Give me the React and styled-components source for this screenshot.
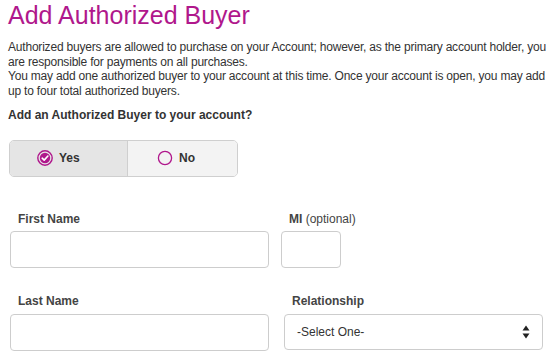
import React, { useState } from "react"
import styled, { createGlobalStyle } from "styled-components"

const Global = createGlobalStyle`
  body {
    margin: 0;
    background: #fff;
    font-family: "Liberation Sans", Arial, Helvetica, sans-serif;
    color: #333;
  }
`

const Page = styled.div`
  padding: 2px 0 0 8px;
  width: 550px;
  box-sizing: border-box;
`

const Title = styled.h1`
  margin: 0;
  font-size: 25px;
  font-weight: normal;
  color: #b0178c;
  line-height: 26px;
`

const Intro = styled.p`
  margin: 12px 0 0 0;
  font-size: 12px;
  line-height: 14.5px;
  letter-spacing: -0.2px;
  color: #333;
`

const Question = styled.div`
  margin-top: 10px;
  font-size: 12px;
  line-height: 14.5px;
  font-weight: bold;
  color: #333;
`

const Toggle = styled.div`
  display: flex;
  margin: 17px 0 0 1px;
  width: 229px;
  height: 37px;
  border: 1px solid #cfcfcf;
  border-radius: 5px;
  overflow: hidden;
  box-sizing: border-box;
`

const Option = styled.button`
  flex: ${p => (p.$first ? "0 0 117px" : "1")};
  display: flex;
  align-items: center;
  gap: 6px;
  padding: 0 0 0 ${p => (p.$first ? "27px" : "29px")};
  border: none;
  border-left: ${p => (p.$first ? "none" : "1px solid #cfcfcf")};
  background: ${p => (p.$active ? "#e5e5e5" : "#f3f3f3")};
  font-family: inherit;
  font-size: 12px;
  font-weight: bold;
  color: #333;
  cursor: pointer;
`

const Row = styled.div`
  display: flex;
  gap: ${p => p.$gap};
  margin-top: ${p => p.$top};
  margin-left: 2px;
`

const Field = styled.div`
  display: flex;
  flex-direction: column;
  width: ${p => p.$w};
`

const Label = styled.label`
  font-size: 12px;
  line-height: 14.5px;
  font-weight: bold;
  color: #444;
  padding-left: 8px;
  margin-bottom: 5px;
  white-space: nowrap;
  span {
    font-weight: normal;
  }
`

const Input = styled.input`
  height: 37px;
  box-sizing: border-box;
  border: 1px solid #cdcdcd;
  border-radius: 4px;
  background: #fff;
  outline: none;
  font-family: inherit;
  font-size: 12px;
`

const Select = styled.div`
  position: relative;
  height: 36px;
  box-sizing: border-box;
  border: 1px solid #cdcdcd;
  border-radius: 4px;
  background: #fff;
  display: flex;
  align-items: center;
  justify-content: space-between;
  padding: 0 12px 0 12px;
  font-size: 12px;
  color: #333;
`

const Check = () => (
  <svg width="16" height="16" viewBox="0 0 16 16">
    <circle cx="8" cy="8" r="7.2" fill="none" stroke="#b0178c" strokeWidth="1.4" />
    <circle cx="8" cy="8" r="5.2" fill="#b0178c" />
    <path d="M5.2 8.2 L7.2 10.1 L10.9 6" fill="none" stroke="#fff" strokeWidth="1.6" strokeLinecap="round" strokeLinejoin="round" />
  </svg>
)

const Ring = () => (
  <svg width="16" height="16" viewBox="0 0 16 16">
    <circle cx="8" cy="8" r="6.6" fill="none" stroke="#b0178c" strokeWidth="1.3" />
  </svg>
)

const Arrows = () => (
  <svg width="8" height="14" viewBox="0 0 8 14">
    <path d="M4 0.5 L7.5 5.5 L0.5 5.5 Z" fill="#222" />
    <path d="M4 13.5 L7.5 8.5 L0.5 8.5 Z" fill="#222" />
  </svg>
)

export default function App() {
  const [yes, setYes] = useState(true)
  return (
    <>
      <Global />
      <Page>
        <Title>Add Authorized Buyer</Title>
        <Intro>
          Authorized buyers are allowed to purchase on your Account; however, as the primary account holder, you
          are responsible for payments on all purchases.
          <br />
          You may add one authorized buyer to your account at this time. Once your account is open, you may add
          up to four total authorized buyers.
        </Intro>
        <Question>Add an Authorized Buyer to your account?</Question>
        <Toggle>
          <Option $first $active={yes} onClick={() => setYes(true)}>
            {yes ? <Check /> : <Ring />}Yes
          </Option>
          <Option $active={!yes} onClick={() => setYes(false)}>
            {yes ? <Ring /> : <Check />}No
          </Option>
        </Toggle>
        <Row $gap="12px" $top="35px">
          <Field $w="259px">
            <Label>First Name</Label>
            <Input />
          </Field>
          <Field $w="60px">
            <Label>MI <span>(optional)</span></Label>
            <Input />
          </Field>
        </Row>
        <Row $gap="15px" $top="26px">
          <Field $w="259px">
            <Label>Last Name</Label>
            <Input />
          </Field>
          <Field $w="259px">
            <Label>Relationship</Label>
            <Select>
              -Select One-
              <Arrows />
            </Select>
          </Field>
        </Row>
      </Page>
    </>
  )
}
